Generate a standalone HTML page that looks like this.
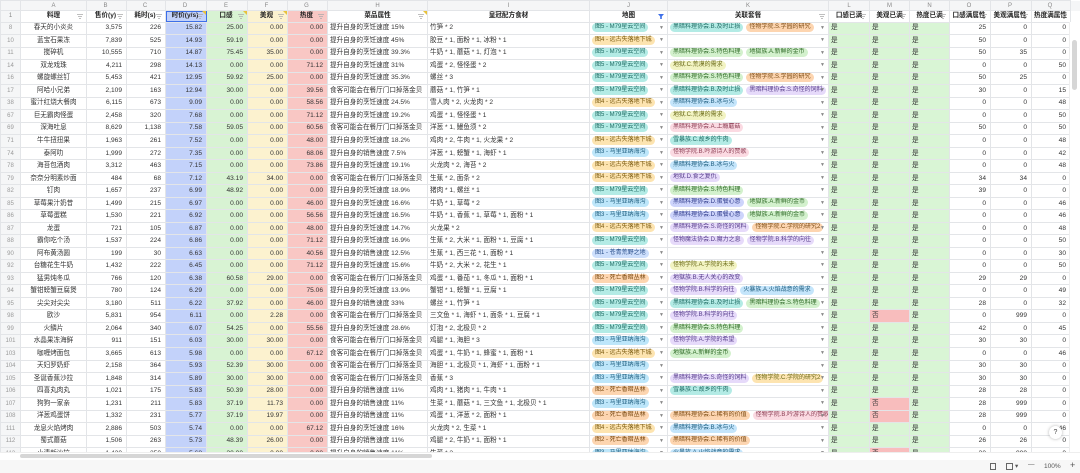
<!DOCTYPE html>
<html><head><meta charset="utf-8">
<style>
*{box-sizing:border-box;margin:0;padding:0}
body{width:1080px;height:473px;overflow:hidden;background:#fff;font-family:"Liberation Sans","Noto Sans CJK SC",sans-serif;font-size:6.6px;color:#333;position:relative}
table{border-collapse:collapse;table-layout:fixed;position:absolute;left:0;top:0;width:1080px}
td{border:1px solid #e3e5e8;height:12.52px;line-height:10px;white-space:nowrap;overflow:hidden;padding:0 2px;position:relative}
tr.h0 td{height:10px;background:#f5f6f7;color:#888;text-align:center;font-size:6px;line-height:8px}
tr.h1 td{height:11.6px;font-weight:bold;text-align:center;color:#222}
tr.h1 td:first-child{font-weight:normal;color:#888;background:#f5f6f7}
td:nth-child(1){background:#f5f6f7;color:#999;text-align:center;font-size:6px}
td:nth-child(2){text-align:center}
td:nth-child(3),td:nth-child(4),td:nth-child(5),td:nth-child(6),td:nth-child(7),td:nth-child(8),td:nth-child(16),td:nth-child(17),td:nth-child(18){text-align:right;padding-right:4px}
td:nth-child(9),td:nth-child(10){text-align:left}
tr.d td:nth-child(5){background:#c3d2fa}
tr.d td:nth-child(6){background:#d8f3d3}
tr.d td:nth-child(7){background:#fcf2cf}
tr.d td:nth-child(8){background:#f9c7c4}
tr.d td:nth-child(13),tr.d td:nth-child(14),tr.d td:nth-child(15){background:#d9f5d5}
tr.d td.no{background:#f8bdbd}
td:nth-child(19){border:none;background:#fff}
.t{display:inline-block;height:9px;line-height:9px;border-radius:5px;padding:0 3px;font-size:6px;margin-right:3px;vertical-align:middle}
.m5{background:#b3ebe5;color:#1f6b63}.m4{background:#fde4b0;color:#7a5a10}.m3{background:#bde6fa;color:#1d5c7d}.m2{background:#fdd5b0;color:#7a4a12}.m1{background:#cddffc;color:#2a4f8a}
.tt{background:#b3ebe5;color:#1f6b63}.to{background:#fdd5b0;color:#7a4a12}.tg{background:#d3f1cd;color:#2f6a27}.ty{background:#f2f3c2;color:#6a6a18}.tp{background:#e6dafa;color:#553c8a}.tk{background:#fbdae2;color:#8a3c52}.tb{background:#c4e5fb;color:#1d5c7d}.ti{background:#cdd4fb;color:#2e3a8a}
i.a{position:absolute;right:3px;top:0;font-style:normal;color:#888;font-size:5px}
.f{position:absolute;right:3px;top:3px;width:6px;height:5px}
.cm{position:absolute;right:0;top:0;width:0;height:0;border-top:4px solid #e8c23a;border-left:4px solid transparent}
.sel{outline:1.5px solid #3d6fe8;outline-offset:-1.5px}
</style></head><body>
<table>
<colgroup><col style="width:20px"><col style="width:66px"><col style="width:40px"><col style="width:39px"><col style="width:41px"><col style="width:41px"><col style="width:40px"><col style="width:40px"><col style="width:100px"><col style="width:162px"><col style="width:78px"><col style="width:161px"><col style="width:41px"><col style="width:40px"><col style="width:40px"><col style="width:41px"><col style="width:41px"><col style="width:39px"><col style="width:11px"></colgroup>
<tr class="h0"><td><td>A<td>B<td>C<td>D<td>E<td>F<td>G<td>H<td>I<td>J<td>K<td>L<td>M<td>N<td>O<td>P<td>Q<td></tr>
<tr class="h1"><td>1<td>料理<svg class="f" viewBox="0 0 6 5"><path d="M0 .5h6M1 2.5h4M2 4.5h2" stroke="#aaa" stroke-width=".8"/></svg><td>售价(y)<svg class="f" viewBox="0 0 6 5"><path d="M0 .5h6M1 2.5h4M2 4.5h2" stroke="#aaa" stroke-width=".8"/></svg><td>耗时(s)<svg class="f" viewBox="0 0 6 5"><path d="M0 .5h6M1 2.5h4M2 4.5h2" stroke="#aaa" stroke-width=".8"/></svg><td class="sel" style="background:#c3d2fa">时价(y/s)<svg class="f" viewBox="0 0 6 5"><path d="M0 .5h6M1 2.5h4M2 4.5h2" stroke="#aaa" stroke-width=".8"/></svg><span class="cm"></span><td style="background:#d8f3d3">口感<svg class="f" viewBox="0 0 6 5"><path d="M0 .5h6M1 2.5h4M2 4.5h2" stroke="#aaa" stroke-width=".8"/></svg><span class="cm"></span><td style="background:#fcf2cf">美观<svg class="f" viewBox="0 0 6 5"><path d="M0 .5h6M1 2.5h4M2 4.5h2" stroke="#aaa" stroke-width=".8"/></svg><span class="cm"></span><td style="background:#f9c7c4">热度<svg class="f" viewBox="0 0 6 5"><path d="M0 .5h6M1 2.5h4M2 4.5h2" stroke="#aaa" stroke-width=".8"/></svg><td>菜品属性<svg class="f" viewBox="0 0 6 5"><path d="M0 .5h6M1 2.5h4M2 4.5h2" stroke="#aaa" stroke-width=".8"/></svg><span class="cm"></span><td>皇冠配方食材<td>地图<svg class="f" viewBox="0 0 6 5"><path d="M0 0h6L3.8 2.5V5H2.2V2.5z" fill="#3d6fe8"/></svg><td>关联套餐<svg class="f" viewBox="0 0 6 5"><path d="M0 .5h6M1 2.5h4M2 4.5h2" stroke="#aaa" stroke-width=".8"/></svg><td>口感已满<svg class="f" viewBox="0 0 6 5"><path d="M0 .5h6M1 2.5h4M2 4.5h2" stroke="#aaa" stroke-width=".8"/></svg><td>美观已满<svg class="f" viewBox="0 0 6 5"><path d="M0 .5h6M1 2.5h4M2 4.5h2" stroke="#aaa" stroke-width=".8"/></svg><td>热度已满<svg class="f" viewBox="0 0 6 5"><path d="M0 .5h6M1 2.5h4M2 4.5h2" stroke="#aaa" stroke-width=".8"/></svg><td>口感满属性<svg class="f" viewBox="0 0 6 5"><path d="M0 .5h6M1 2.5h4M2 4.5h2" stroke="#aaa" stroke-width=".8"/></svg><td>美观满属性<svg class="f" viewBox="0 0 6 5"><path d="M0 .5h6M1 2.5h4M2 4.5h2" stroke="#aaa" stroke-width=".8"/></svg><td>热度满属性<svg class="f" viewBox="0 0 6 5"><path d="M0 .5h6M1 2.5h4M2 4.5h2" stroke="#aaa" stroke-width=".8"/></svg><td></tr>
<tr class="d"><td>8<td>春天的小炎炎<td>3,575<td>226<td>15.82<td>25.00<td>0.00<td>0.00<td>提升自身的烹饪速度 15%<td>竹笋 * 2<td><span class="t m5">图5 - M79星云空间</span><i class="a">▼</i><td><span class="t tt">黑暗料理协会.B.及时止损</span><span class="t to">怪物学院.S.学园的研究</span><i class="a">▼</i><td>是<td>是<td>是<td>25<td>0<td>0<td></tr>
<tr class="d"><td>10<td>蓝宝石果冻<td>7,839<td>525<td>14.93<td>59.19<td>0.00<td>0.00<td>提升自身的烹饪速度 45%<td>胶豆 * 1, 面粉 * 1, 冰粉 * 1<td><span class="t m4">图4 - 远古失落地下城</span><i class="a">▼</i><td><i class="a">▼</i><td>是<td>是<td>是<td>50<td>0<td>0<td></tr>
<tr class="d"><td>11<td>搅碎机<td>10,555<td>710<td>14.87<td>75.45<td>35.00<td>0.00<td>提升自身的烹饪速度 39.3%<td>牛奶 * 1, 蘑菇 * 1, 灯泡 * 1<td><span class="t m5">图5 - M79星云空间</span><i class="a">▼</i><td><span class="t tg">黑暗料理协会.S.特色料理</span><span class="t tg">地獄族.A.新鲜的金币</span><i class="a">▼</i><td>是<td>是<td>是<td>50<td>35<td>0<td></tr>
<tr class="d"><td>14<td>双龙戏珠<td>4,211<td>298<td>14.13<td>0.00<td>0.00<td>71.12<td>提升自身的烹饪速度 31%<td>鸡蛋 * 2, 怪怪蛋 * 2<td><span class="t m5">图5 - M79星云空间</span><i class="a">▼</i><td><span class="t ty">地狱.C.荒漠的需求</span><i class="a">▼</i><td>是<td>是<td>是<td>0<td>0<td>50<td></tr>
<tr class="d"><td>16<td>螺旋螺丝钉<td>5,453<td>421<td>12.95<td>59.92<td>25.00<td>0.00<td>提升自身的烹饪速度 35.3%<td>螺丝 * 3<td><span class="t m5">图5 - M79星云空间</span><i class="a">▼</i><td><span class="t tg">黑暗料理协会.S.特色料理</span><span class="t to">怪物学院.S.学园的研究</span><i class="a">▼</i><td>是<td>是<td>是<td>50<td>25<td>0<td></tr>
<tr class="d"><td>17<td>阿哈小兄弟<td>2,109<td>163<td>12.94<td>30.00<td>0.00<td>39.56<td>食客可能会在餐厅门口掉落金贝<td>蘑菇 * 1, 竹笋 * 1<td><span class="t m5">图5 - M79星云空间</span><i class="a">▼</i><td><span class="t tt">黑暗料理协会.B.及时止损</span><span class="t tp">黑暗料理协会.S.奇怪的饲料</span><i class="a">▼</i><td>是<td>是<td>是<td>30<td>0<td>15<td></tr>
<tr class="d"><td>38<td>蜜汁红烧大餐肉<td>6,115<td>673<td>9.09<td>0.00<td>0.00<td>58.56<td>提升自身的烹饪速度 24.5%<td>雪人肉 * 2, 火龙肉 * 2<td><span class="t m4">图4 - 远古失落地下城</span><i class="a">▼</i><td><span class="t tb">黑暗料理协会.B.冰与火</span><i class="a">▼</i><td>是<td>是<td>是<td>0<td>0<td>48<td></tr>
<tr class="d"><td>67<td>巨无霸肉怪蛋<td>2,458<td>320<td>7.68<td>0.00<td>0.00<td>71.12<td>提升自身的烹饪速度 19.2%<td>鸡蛋 * 1, 怪怪蛋 * 1<td><span class="t m5">图5 - M79星云空间</span><i class="a">▼</i><td><span class="t ty">地狱.C.荒漠的需求</span><i class="a">▼</i><td>是<td>是<td>是<td>0<td>0<td>50<td></tr>
<tr class="d"><td>69<td>深海吐息<td>8,629<td>1,138<td>7.58<td>59.05<td>0.00<td>60.56<td>食客可能会在餐厅门口掉落金贝<td>洋葱 * 1, 鳗鱼须 * 2<td><span class="t m5">图5 - M79星云空间</span><i class="a">▼</i><td><span class="t tk">黑暗料理协会.A.上瘾蘑菇</span><i class="a">▼</i><td>是<td>是<td>是<td>50<td>0<td>50<td></tr>
<tr class="d"><td>71<td>牛牛扭扭果<td>1,963<td>261<td>7.52<td>0.00<td>0.00<td>48.00<td>提升自身的烹饪速度 18.2%<td>鸡肉 * 2, 牛肉 * 1, 火龙果 * 2<td><span class="t m4">图4 - 远古失落地下城</span><i class="a">▼</i><td><span class="t tt">雪暴族.C.故乡的牛肉</span><i class="a">▼</i><td>是<td>是<td>是<td>0<td>0<td>48<td></tr>
<tr class="d"><td>74<td>泰阿叻<td>1,999<td>272<td>7.35<td>0.00<td>0.00<td>68.06<td>提升自身的销售速度 7.5%<td>洋葱 * 1, 螃蟹 * 1, 海虾 * 1<td><span class="t m3">图3 - 马里亚纳海沟</span><i class="a">▼</i><td><span class="t tk">怪物学院.B.吟游诗人的赞歌</span><i class="a">▼</i><td>是<td>是<td>是<td>0<td>0<td>42<td></tr>
<tr class="d"><td>78<td>海苔包酒肉<td>3,312<td>463<td>7.15<td>0.00<td>0.00<td>73.86<td>提升自身的烹饪速度 19.1%<td>火龙肉 * 2, 海苔 * 2<td><span class="t m4">图4 - 远古失落地下城</span><i class="a">▼</i><td><span class="t tb">黑暗料理协会.B.冰与火</span><i class="a">▼</i><td>是<td>是<td>是<td>0<td>0<td>48<td></tr>
<tr class="d"><td>79<td>奈奈分明素炒面<td>484<td>68<td>7.12<td>43.19<td>34.00<td>0.00<td>食客可能会在餐厅门口掉落金贝<td>生蕉 * 2, 面条 * 2<td><span class="t m4">图4 - 远古失落地下城</span><i class="a">▼</i><td><span class="t tp">地狱.D.食之复仇</span><i class="a">▼</i><td>是<td>是<td>是<td>34<td>34<td>0<td></tr>
<tr class="d"><td>82<td>钉肉<td>1,657<td>237<td>6.99<td>48.92<td>0.00<td>0.00<td>提升自身的烹饪速度 18.9%<td>猪肉 * 1, 螺丝 * 1<td><span class="t m5">图5 - M79星云空间</span><i class="a">▼</i><td><span class="t tg">黑暗料理协会.S.特色料理</span><i class="a">▼</i><td>是<td>是<td>是<td>39<td>0<td>0<td></tr>
<tr class="d"><td>85<td>草莓果汁奶昔<td>1,499<td>215<td>6.97<td>0.00<td>0.00<td>46.00<td>提升自身的烹饪速度 16.6%<td>牛奶 * 1, 草莓 * 2<td><span class="t m3">图3 - 马里亚纳海沟</span><i class="a">▼</i><td><span class="t ti">黑暗料理协会.D.蛋餐心意</span><span class="t tg">地獄族.A.新鲜的金币</span><i class="a">▼</i><td>是<td>是<td>是<td>0<td>0<td>46<td></tr>
<tr class="d"><td>86<td>草莓蛋糕<td>1,530<td>221<td>6.92<td>0.00<td>0.00<td>56.56<td>提升自身的烹饪速度 16.5%<td>牛奶 * 1, 香蕉 * 1, 草莓 * 1, 面粉 * 1<td><span class="t m3">图3 - 马里亚纳海沟</span><i class="a">▼</i><td><span class="t ti">黑暗料理协会.D.蛋餐心意</span><span class="t tg">地獄族.A.新鲜的金币</span><i class="a">▼</i><td>是<td>是<td>是<td>0<td>0<td>46<td></tr>
<tr class="d"><td>87<td>龙蛋<td>721<td>105<td>6.87<td>0.00<td>0.00<td>48.00<td>提升自身的烹饪速度 14.7%<td>火龙果 * 2<td><span class="t m4">图4 - 远古失落地下城</span><i class="a">▼</i><td><span class="t tp">黑暗料理协会.S.奇怪的饲料</span><span class="t to">怪物学院.C.学院的研究2</span><i class="a">▼</i><td>是<td>是<td>是<td>0<td>0<td>48<td></tr>
<tr class="d"><td>88<td>霸你吃个汤<td>1,537<td>224<td>6.86<td>0.00<td>0.00<td>71.12<td>提升自身的烹饪速度 16.9%<td>生蕉 * 2, 大米 * 1, 面粉 * 1, 豆腐 * 1<td><span class="t m5">图5 - M79星云空间</span><i class="a">▼</i><td><span class="t tp">怪物魔法协会.D.魔力之息</span><span class="t tp">怪物学院.B.科学的向往</span><i class="a">▼</i><td>是<td>是<td>是<td>0<td>0<td>50<td></tr>
<tr class="d"><td>90<td>阿布黄汤圆<td>199<td>30<td>6.63<td>0.00<td>0.00<td>40.56<td>提升自身的销售速度 12.5%<td>生蕉 * 1, 西三花 * 1, 面粉 * 1<td><span class="t m1">图1 - 苍青荒野之地</span><i class="a">▼</i><td><i class="a">▼</i><td>是<td>是<td>是<td>0<td>0<td>30<td></tr>
<tr class="d"><td>92<td>台糖花生牛奶<td>1,432<td>222<td>6.45<td>0.00<td>0.00<td>71.12<td>提升自身的烹饪速度 15.6%<td>牛奶 * 2, 大米 * 2, 花生 * 1<td><span class="t m5">图5 - M79星云空间</span><i class="a">▼</i><td><span class="t ty">怪物学院.A.学院的未来</span><i class="a">▼</i><td>是<td>是<td>是<td>0<td>0<td>50<td></tr>
<tr class="d"><td>93<td>猛男炖冬瓜<td>766<td>120<td>6.38<td>60.58<td>29.00<td>0.00<td>食客可能会在餐厅门口掉落金贝<td>鸡蛋 * 1, 番茄 * 1, 冬瓜 * 1, 面粉 * 1<td><span class="t m2">图2 - 死亡香暗丛林</span><i class="a">▼</i><td><span class="t tp">地獄族.B.无人关心的改变</span><i class="a">▼</i><td>是<td>是<td>是<td>29<td>29<td>0<td></tr>
<tr class="d"><td>94<td>蟹钳螃蟹豆腐煲<td>780<td>124<td>6.29<td>0.00<td>0.00<td>75.06<td>提升自身的烹饪速度 13.9%<td>蟹钳 * 1, 螃蟹 * 1, 豆腐 * 1<td><span class="t m5">图5 - M79星云空间</span><i class="a">▼</i><td><span class="t tp">怪物学院.B.科学的向往</span><span class="t tb">火暴族.A.火焰战意的需求</span><i class="a">▼</i><td>是<td>是<td>是<td>0<td>0<td>49<td></tr>
<tr class="d"><td>95<td>尖尖对尖尖<td>3,180<td>511<td>6.22<td>37.92<td>0.00<td>46.00<td>提升自身的销售速度 33%<td>螺丝 * 1, 竹笋 * 1<td><span class="t m5">图5 - M79星云空间</span><i class="a">▼</i><td><span class="t tt">黑暗料理协会.B.及时止损</span><span class="t tg">黑暗料理协会.S.特色料理</span><i class="a">▼</i><td>是<td>是<td>是<td>28<td>0<td>32<td></tr>
<tr class="d"><td>98<td>欧沙<td>5,831<td>954<td>6.11<td>0.00<td>2.28<td>0.00<td>食客可能会在餐厅门口掉落金贝<td>三文鱼 * 1, 海虾 * 1, 面条 * 1, 豆腐 * 1<td><span class="t m5">图5 - M79星云空间</span><i class="a">▼</i><td><span class="t tp">怪物学院.B.科学的向往</span><i class="a">▼</i><td>是<td class="no">否<td>是<td>0<td>999<td>0<td></tr>
<tr class="d"><td>99<td>火鳞片<td>2,064<td>340<td>6.07<td>54.25<td>0.00<td>55.56<td>提升自身的烹饪速度 28.6%<td>灯泡 * 2, 北极贝 * 2<td><span class="t m5">图5 - M79星云空间</span><i class="a">▼</i><td><span class="t tg">黑暗料理协会.S.特色料理</span><i class="a">▼</i><td>是<td>是<td>是<td>42<td>0<td>45<td></tr>
<tr class="d"><td>101<td>水晶果冻海鲜<td>911<td>151<td>6.03<td>30.00<td>30.00<td>0.00<td>食客可能会在餐厅门口掉落金贝<td>鸡腿 * 1, 海胆 * 3<td><span class="t m3">图3 - 马里亚纳海沟</span><i class="a">▼</i><td><span class="t tp">怪物学院.A.学院的希望</span><i class="a">▼</i><td>是<td>是<td>是<td>30<td>30<td>0<td></tr>
<tr class="d"><td>103<td>咖喱烤面包<td>3,665<td>613<td>5.98<td>0.00<td>0.00<td>67.12<td>食客可能会在餐厅门口掉落金贝<td>鸡蛋 * 1, 牛奶 * 1, 蜂蜜 * 1, 面粉 * 1<td><span class="t m4">图4 - 远古失落地下城</span><i class="a">▼</i><td><span class="t tg">地獄族.A.新鲜的金币</span><i class="a">▼</i><td>是<td>是<td>是<td>0<td>0<td>46<td></tr>
<tr class="d"><td>104<td>天妇罗奶虾<td>2,158<td>364<td>5.93<td>52.39<td>30.00<td>0.00<td>食客可能会在餐厅门口掉落金贝<td>海胆 * 1, 北极贝 * 1, 海虾 * 1, 面粉 * 1<td><span class="t m3">图3 - 马里亚纳海沟</span><i class="a">▼</i><td><i class="a">▼</i><td>是<td>是<td>是<td>30<td>30<td>0<td></tr>
<tr class="d"><td>105<td>圣诞香蕉沙拉<td>1,848<td>314<td>5.89<td>30.00<td>30.00<td>0.00<td>食客可能会在餐厅门口掉落金贝<td>香蕉 * 3<td><span class="t m3">图3 - 马里亚纳海沟</span><i class="a">▼</i><td><span class="t tp">黑暗料理协会.S.奇怪的饲料</span><span class="t ty" style="background:#fde4b0">怪物学院.C.学院的研究2</span><i class="a">▼</i><td>是<td>是<td>是<td>30<td>30<td>0<td></tr>
<tr class="d"><td>106<td>四喜丸肉丸<td>1,021<td>175<td>5.83<td>50.39<td>28.00<td>0.00<td>提升自身的销售速度 11%<td>鸡肉 * 1, 猪肉 * 1, 牛肉 * 1<td><span class="t m2">图2 - 死亡香暗丛林</span><i class="a">▼</i><td><span class="t tt">雪暴族.C.故乡的牛肉</span><i class="a">▼</i><td>是<td>是<td>是<td>28<td>28<td>0<td></tr>
<tr class="d"><td>107<td>狗狗一家亲<td>1,231<td>211<td>5.83<td>37.19<td>11.73<td>0.00<td>提升自身的销售速度 11%<td>生菜 * 1, 蘑菇 * 1, 三文鱼 * 1, 北极贝 * 1<td><span class="t m3">图3 - 马里亚纳海沟</span><i class="a">▼</i><td><i class="a">▼</i><td>是<td class="no">否<td>是<td>28<td>999<td>0<td></tr>
<tr class="d"><td>108<td>洋葱鸡蛋饼<td>1,332<td>231<td>5.77<td>37.19<td>19.97<td>0.00<td>提升自身的销售速度 11%<td>鸡蛋 * 1, 洋葱 * 2, 面粉 * 1<td><span class="t m2">图2 - 死亡香暗丛林</span><i class="a">▼</i><td><span class="t to">黑暗料理协会.C.稀有的价值</span><span class="t tk">怪物学院.B.吟游诗人的赞歌</span><i class="a">▼</i><td>是<td class="no">否<td>是<td>28<td>999<td>0<td></tr>
<tr class="d"><td>111<td>龙息火焰烤肉<td>2,886<td>503<td>5.74<td>0.00<td>0.00<td>67.12<td>提升自身的烹饪速度 16%<td>火龙肉 * 2, 生菜 * 1<td><span class="t m4">图4 - 远古失落地下城</span><i class="a">▼</i><td><span class="t tb">黑暗料理协会.B.冰与火</span><i class="a">▼</i><td>是<td>是<td>是<td>0<td>0<td>46<td></tr>
<tr class="d"><td>112<td>蜀式蘑菇<td>1,506<td>263<td>5.73<td>48.39<td>26.00<td>0.00<td>提升自身的销售速度 11%<td>鸡腿 * 2, 牛奶 * 1, 面粉 * 1<td><span class="t m2">图2 - 死亡香暗丛林</span><i class="a">▼</i><td><span class="t to">黑暗料理协会.C.稀有的价值</span><i class="a">▼</i><td>是<td>是<td>是<td>26<td>26<td>0<td></tr>
<tr class="d"><td>113<td>小清新沙拉<td>1,420<td>250<td>5.68<td>30.00<td>0.00<td>0.00<td>提升自身的销售速度 11%<td>生菜 * 2<td><span class="t m3">图3 - 马里亚纳海沟</span><i class="a">▼</i><td><span class="t tb">火暴族.A.火焰战意的需求</span><i class="a">▼</i><td>是<td class="no">否<td>是<td>30<td>999<td>0<td></tr>
</table>
<div style="position:absolute;left:1069px;top:22px;width:11px;height:432px;background:#fff;border-left:1px solid #eee"></div>
<div style="position:absolute;left:1072px;top:40px;width:5px;height:50px;background:#d6d6d6;border-radius:3px"></div>
<div style="position:absolute;left:0;top:452px;width:1080px;height:8px;background:#fff;border-top:1px solid #eee"></div>
<div style="position:absolute;left:20px;top:454px;width:412px;height:4px;background:#d6d6d6;border-radius:2px"></div>
<div style="position:absolute;left:0;top:460px;width:1080px;height:13px;background:#f7f7f7;font-size:6.5px;color:#555">
<span style="position:absolute;left:990px;top:3px;width:6px;height:7px;border:1px solid #666"></span>
<span style="position:absolute;left:1006px;top:3px;width:7px;height:7px;border:1px solid #666"></span>
<span style="position:absolute;left:1015px;top:2px">▾</span>
<span style="position:absolute;left:1028px;top:1px">—</span>
<span style="position:absolute;left:1044px;top:3px">100%</span>
<span style="position:absolute;left:1070px;top:0px;font-size:9px">+</span>
</div>
<div style="position:absolute;left:1049px;top:426px;width:13px;height:13px;border-radius:50%;background:#fff;box-shadow:0 0 3px rgba(0,0,0,.3);font-size:7px;text-align:center;line-height:13px;color:#444">?</div>
</body></html>
